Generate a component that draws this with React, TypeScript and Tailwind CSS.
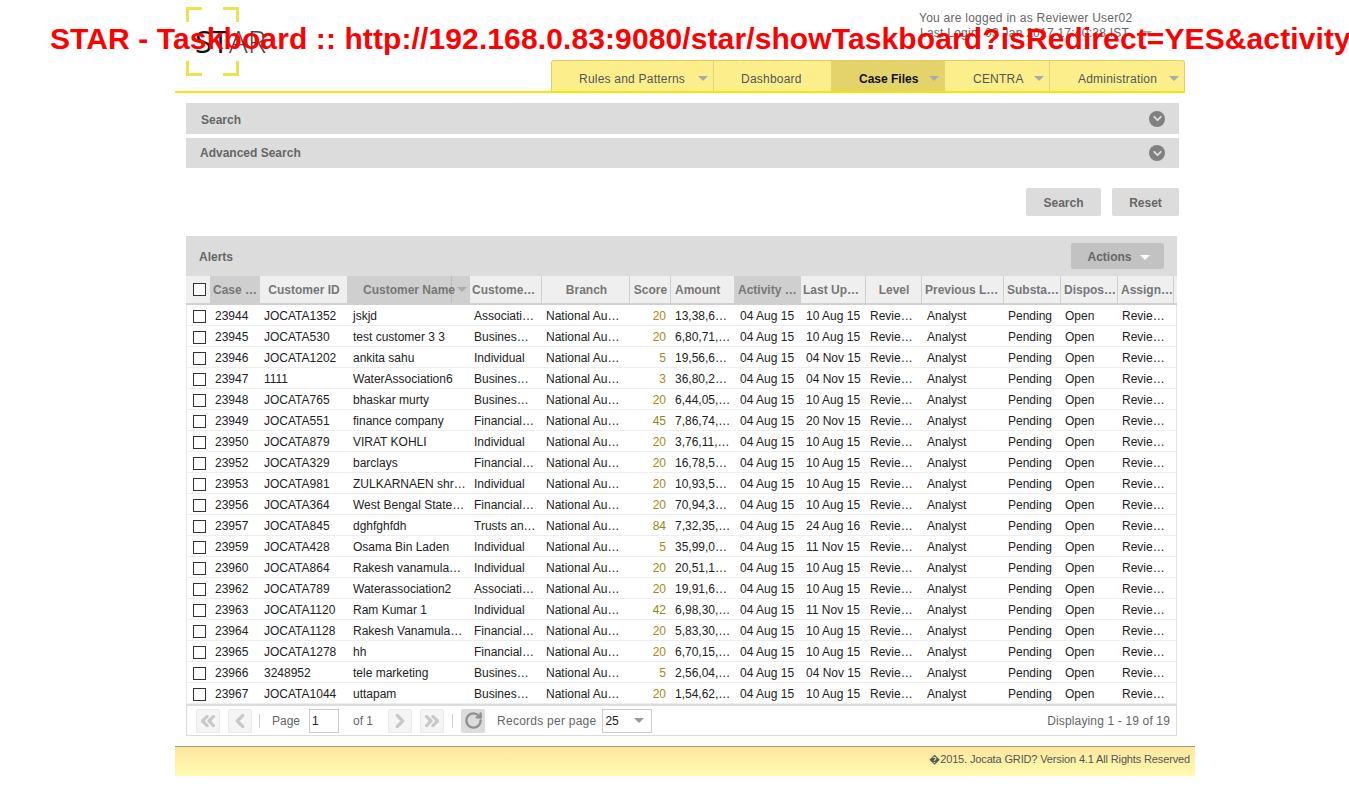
import { ChevronDown, ChevronLeft, ChevronRight, ChevronsLeft, ChevronsRight, RotateCw } from "lucide-react";

const gridCols = "grid grid-cols-[24px_50px_88px_122px_72px_88px_41px_64px_66px_65px_56px_82px_57px_57px_56px]";

const headers = [
  { label: "Case …", cls: "pl-[3px] bg-[#cfcfcf]" },
  { label: "Customer ID", cls: "justify-center pl-[1px]" },
  { label: "Customer Name", cls: "pl-[15px] bg-[#cfcfcf]" },
  { label: "Custome…", cls: "pl-[2px]" },
  { label: "Branch", cls: "justify-center pl-[2px]" },
  { label: "Score", cls: "justify-center pl-[1px]" },
  { label: "Amount", cls: "pl-[4px]" },
  { label: "Activity …", cls: "pl-[3px] bg-[#cfcfcf]" },
  { label: "Last Up…", cls: "pl-[2px]" },
  { label: "Level", cls: "justify-center pl-[1px]" },
  { label: "Previous L…", cls: "pl-[3px]" },
  { label: "Substa…", cls: "pl-[3px]" },
  { label: "Dispos…", cls: "pl-[3px]" },
  { label: "Assign…", cls: "pl-[3px]" },
];

const rows = [
  ["23944", "JOCATA1352", "jskjd", "Associati…", "20", "13,38,6…", "10 Aug 15"],
  ["23945", "JOCATA530", "test customer 3 3", "Busines…", "20", "6,80,71,…", "10 Aug 15"],
  ["23946", "JOCATA1202", "ankita sahu", "Individual", "5", "19,56,6…", "04 Nov 15"],
  ["23947", "1111", "WaterAssociation6", "Busines…", "3", "36,80,2…", "04 Nov 15"],
  ["23948", "JOCATA765", "bhaskar murty", "Busines…", "20", "6,44,05,…", "10 Aug 15"],
  ["23949", "JOCATA551", "finance company", "Financial…", "45", "7,86,74,…", "20 Nov 15"],
  ["23950", "JOCATA879", "VIRAT KOHLI", "Individual", "20", "3,76,11,…", "10 Aug 15"],
  ["23952", "JOCATA329", "barclays", "Financial…", "20", "16,78,5…", "10 Aug 15"],
  ["23953", "JOCATA981", "ZULKARNAEN shr…", "Individual", "20", "10,93,5…", "10 Aug 15"],
  ["23956", "JOCATA364", "West Bengal State…", "Financial…", "20", "70,94,3…", "10 Aug 15"],
  ["23957", "JOCATA845", "dghfghfdh", "Trusts an…", "84", "7,32,35,…", "24 Aug 16"],
  ["23959", "JOCATA428", "Osama Bin Laden", "Individual", "5", "35,99,0…", "11 Nov 15"],
  ["23960", "JOCATA864", "Rakesh vanamula…", "Individual", "20", "20,51,1…", "10 Aug 15"],
  ["23962", "JOCATA789", "Waterassociation2", "Associati…", "20", "19,91,6…", "10 Aug 15"],
  ["23963", "JOCATA1120", "Ram Kumar 1", "Individual", "42", "6,98,30,…", "11 Nov 15"],
  ["23964", "JOCATA1128", "Rakesh Vanamula…", "Financial…", "20", "5,83,30,…", "10 Aug 15"],
  ["23965", "JOCATA1278", "hh", "Financial…", "20", "6,70,15,…", "10 Aug 15"],
  ["23966", "3248952", "tele marketing", "Busines…", "5", "2,56,04,…", "04 Nov 15"],
  ["23967", "JOCATA1044", "uttapam", "Busines…", "20", "1,54,62,…", "10 Aug 15"],
];

const menu = [
  { label: "Rules and Patterns", w: "w-[162px]", arrow: true, pl: "pl-[27px]" },
  { label: "Dashboard", w: "w-[118px]", arrow: false, pl: "pl-[27px]" },
  { label: "Case Files", w: "w-[113px]", arrow: true, pl: "pl-[27px]", active: true },
  { label: "CENTRA", w: "w-[105px]", arrow: true, pl: "pl-[28px]" },
  { label: "Administration", w: "w-[134px]", arrow: true, pl: "pl-[28px]" },
];

const Arrow = ({ cls }: { cls: string }) => (
  <span className={`w-0 h-0 border-x-[5px] border-x-transparent border-t-[5px] ${cls}`} />
);

const Sep = () => <span className="w-px h-[14px] bg-[#d5d5d5]" />;

const PageBtn = ({ children }: { children: React.ReactNode }) => (
  <span className="w-6 h-6 flex items-center justify-center rounded-[2px] border border-[#eaeaea] bg-[#f5f5f5] text-[#c9c9c9]">
    {children}
  </span>
);

const SearchBar = ({ label, cls, textCls }: { label: string; cls: string; textCls?: string }) => (
  <div className={`bg-[#dcdcdc] flex items-center justify-between pr-[14px] text-xs font-bold text-[#666] ${cls}`}>
    <span className={textCls}>{label}</span>
    <span className="w-4 h-4 rounded-full bg-[#808080] flex items-center justify-center">
      <ChevronDown size={13} strokeWidth={3.5} className="text-[#dcdcdc]" />
    </span>
  </div>
);

export default function App() {
  return (
    <div className="relative h-[791px] overflow-hidden bg-white font-['Liberation_Sans',Arial,sans-serif] text-xs text-[#222]">
      {/* browser title that the page leaks on top of everything */}
      <div className="absolute left-[50px] top-[20px] z-10 whitespace-nowrap text-[30px] leading-[38px] tracking-[0.11px] font-bold text-[#ff0000]">
        STAR - Taskboard :: http://192.168.0.83:9080/star/showTaskboard?isRedirect=YES&activity
      </div>

      <div className="ml-[175px] w-[1020px]">
        <header className="w-[1010px] h-[93px] border-b-2 border-[#f4e800] flex justify-between">
          <div className="relative ml-[11px] mt-[7px] w-[90px] h-[69px]">
            <svg width="53" height="69" viewBox="0 0 53 69" fill="none" stroke="#efe050" strokeWidth="3">
              <path d="M1.5 15V1.5H16M37 1.5H51.5V15M1.5 54V67.5H16M37 67.5H51.5V54" />
            </svg>
            <span className="absolute left-[9px] top-[18px] whitespace-nowrap text-[31px] leading-[32px] font-['Open_Sans',sans-serif] text-[#111]">
              ST<span className="font-light text-[#444]">AR</span>
            </span>
          </div>
          <div className="flex flex-col items-end">
            <div className="mt-[10px] mr-[30px] w-[236px] h-[50px] text-[#666] leading-[15px] tracking-[0.25px]">
              <div className="mt-[1px]">You are logged in as Reviewer User02</div>
              <div className="flex items-center gap-[13px] ml-[1px]">
                <span>Last Login: 03 Jan 2017 17:40:38 IST</span>
                <Arrow cls="border-t-[#aaa]" />
              </div>
            </div>
            <nav className="w-[634px] h-[31px] flex rounded-t-[3px] border border-b-0 border-[#e0d060] bg-[#fcef8b] text-[#555]">
              {menu.map((m) => (
                <div
                  key={m.label}
                  className={`${m.w} ${m.pl} relative flex items-center pt-[6px] border-r border-[#e0d474] last:border-r-0 ${m.active ? "bg-[#e4d36a] font-bold text-[#111]" : "tracking-[0.22px]"}`}
                >
                  {m.label}
                  {m.arrow && <span className="absolute right-[5px] top-[15px] flex"><Arrow cls="border-t-[#aaa]" /></span>}
                </div>
              ))}
            </nav>
          </div>
        </header>

        <div className="ml-[11px] w-[993px] mt-[10px] flex flex-col gap-1">
          <SearchBar label="Search" cls="h-[31px] pl-[15px]" textCls="pt-[2px]" />
          <SearchBar label="Advanced Search" cls="h-[30px] pl-[14px]" />
        </div>

        <div className="ml-[11px] w-[993px] mt-[20px] flex justify-end gap-[11px] text-xs font-bold text-[#666]">
          <span className="w-[75px] h-7 pt-[2px] rounded-[2px] bg-[#dcdcdc] flex items-center justify-center">Search</span>
          <span className="w-[67px] h-7 pt-[2px] rounded-[2px] bg-[#dcdcdc] flex items-center justify-center">Reset</span>
        </div>

        <section className="ml-[11px] w-[991px] mt-[20px]">
          <div className="h-10 bg-[#dcdcdc] flex items-center justify-between pl-[13px] pr-[13px] font-bold text-[#666]">
            <span className="pt-[2px]">Alerts</span>
            <span className="w-[93px] h-[26px] pt-[2px] pl-[2px] rounded-[2px] bg-[#c2c2c2] flex items-center justify-center gap-[8px]">
              Actions
              <Arrow cls="border-t-white" />
            </span>
          </div>

          <div className={`${gridCols} h-[29px] bg-[#efefef] border-b-2 border-[#d0d0d0] font-bold text-[#777]`}>
            <div className="flex items-center pl-[7px]">
              <span className="w-[13px] h-[13px] border border-[#333] bg-white" />
            </div>
            {headers.map((h) => (
              <div key={h.label} className={`relative flex items-center border-r border-[#cfcfcf] whitespace-nowrap overflow-hidden ${h.cls}`}>
                {h.label === "Customer Name" && (
                  <span className="absolute right-0 top-0 h-full w-[18px] bg-[#cfcfcf] border-l border-[#bbb] flex items-center justify-center pl-[2px]">
                    <Arrow cls="border-t-[#aaa]" />
                  </span>
                )}
                <span className="relative">{h.label}</span>
              </div>
            ))}
          </div>

          <div className="border-x border-[#e6e6e6]">
            {rows.map((r) => (
              <div key={r[0]} className={`${gridCols} -ml-px h-[21px] pt-[2px] items-center border-b border-[#eee] whitespace-nowrap`}>
                <div className="pl-[7px] flex">
                  <span className="w-[13px] h-[13px] border border-[#333]" />
                </div>
                <div className="pl-[5px]">{r[0]}</div>
                <div className="pl-[4px]">{r[1]}</div>
                <div className="pl-[5px]">{r[2]}</div>
                <div className="pl-[4px]">{r[3]}</div>
                <div className="pl-[4px]">National Au…</div>
                <div className={`pr-[5px] text-right ${Number(r[4]) > 40 ? "text-[#8f8a20]" : "text-[#a68a1a]"}`}>{r[4]}</div>
                <div className="pl-[4px]">{r[5]}</div>
                <div className="pl-[5px]">04 Aug 15</div>
                <div className="pl-[5px]">{r[6]}</div>
                <div className="pl-[4px]">Revie…</div>
                <div className="pl-[5px]">Analyst</div>
                <div className="pl-[4px]">Pending</div>
                <div className="pl-[4px]">Open</div>
                <div className="pl-[4px]">Revie…</div>
              </div>
            ))}
          </div>

          <div className="h-[32px] border-x border-b border-t-2 border-[#dcdcdc] flex items-center pl-[9px] pr-[6px] text-[#666]">
            <PageBtn><ChevronsLeft size={22} strokeWidth={3.5} /></PageBtn>
            <span className="w-[8px]" />
            <PageBtn><ChevronLeft size={22} strokeWidth={3.5} /></PageBtn>
            <span className="w-[7px]" />
            <Sep />
            <span className="ml-[12px]">Page</span>
            <span className="ml-[9px] w-[30px] h-6 border border-[#ccc] pl-[2px] flex items-center text-[#222]">1</span>
            <span className="ml-[14px]">of 1</span>
            <span className="ml-[7px]"><Sep /></span>
            <span className="w-[8px]" />
            <PageBtn><ChevronRight size={22} strokeWidth={3.5} /></PageBtn>
            <span className="w-[8px]" />
            <PageBtn><ChevronsRight size={22} strokeWidth={3.5} /></PageBtn>
            <span className="w-[8px]" />
            <Sep />
            <span className="w-[8px]" />
            <span className="w-6 h-6 flex items-center justify-center rounded-[2px] bg-[#dcdcdc] text-[#909090]">
              <RotateCw size={19} strokeWidth={3} />
            </span>
            <span className="ml-[12px] tracking-[0.25px]">Records per page</span>
            <span className="ml-[6px] w-[50px] h-6 border border-[#ccc] pl-[2px] flex items-center justify-between pr-[7px] text-[#222]">
              25
              <Arrow cls="border-t-[#999]" />
            </span>
            <span className="ml-[8px]"><Sep /></span>
            <span className="ml-auto tracking-[0.15px]">Displaying 1 - 19 of 19</span>
          </div>
        </section>

        <footer className="mt-[10px] h-[30px] pb-[4px] border-t border-[#a89f70] bg-gradient-to-b from-[#fde6a0] to-[#fffbb0] flex items-center justify-end pr-[5px] text-[11px] tracking-[-0.14px] text-[#555]">
          �2015. Jocata GRID? Version 4.1 All Rights Reserved
        </footer>
      </div>
    </div>
  );
}
